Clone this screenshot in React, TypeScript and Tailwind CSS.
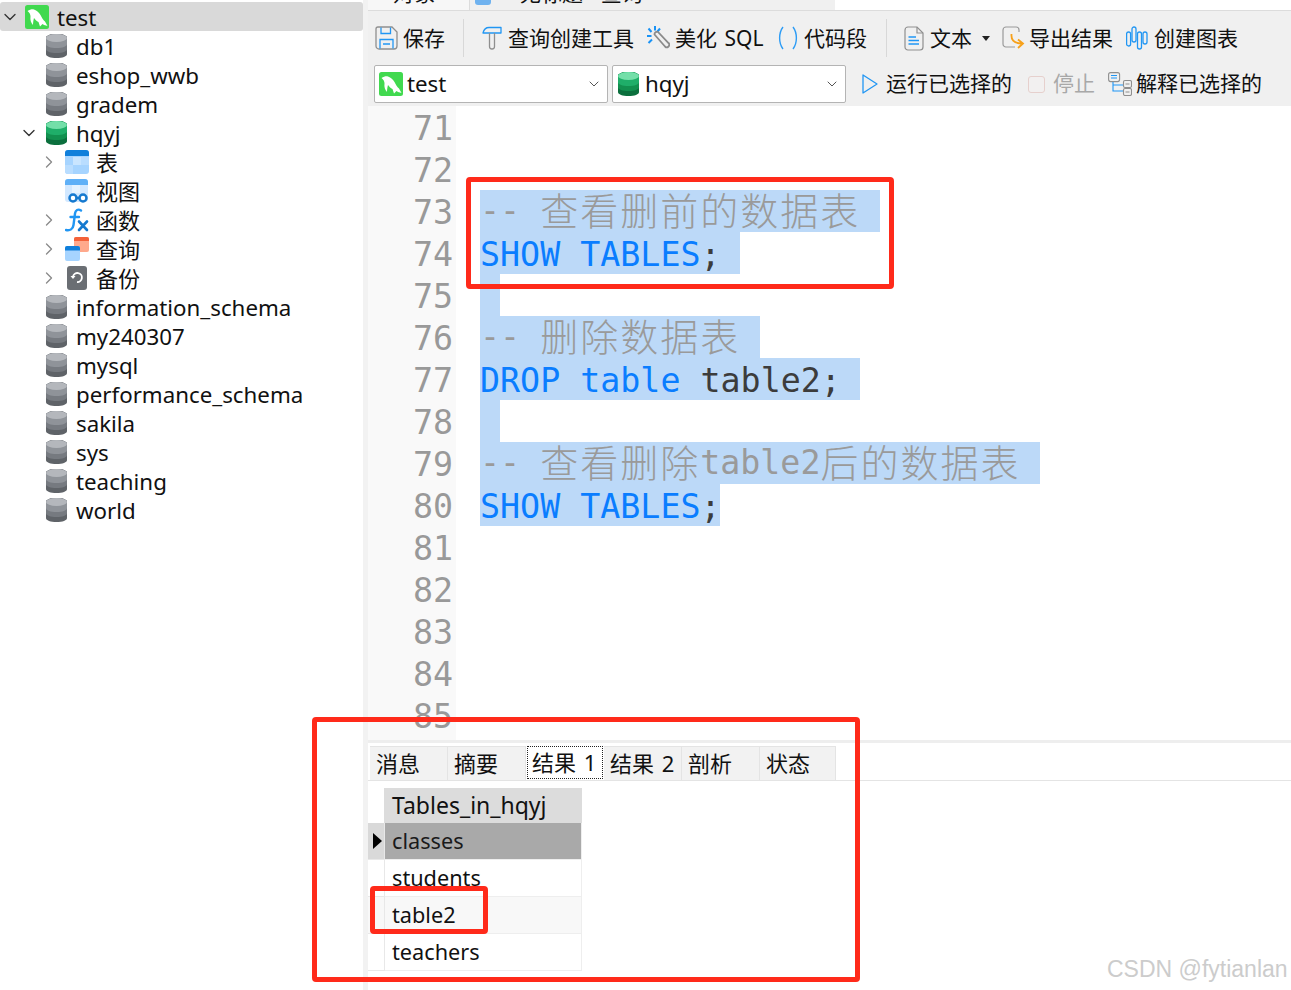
import { ChevronDown, ChevronRight } from 'lucide-react'
import type { ReactNode } from 'react'

const UI_FONT = "font-['Noto_Sans','Noto_Sans_CJK_SC',sans-serif]"

function MysqlIcon({ size = 24 }: { size?: number }) {
  return (
    <svg width={size} height={size} viewBox="0 0 24 24" className="shrink-0">
      <rect width="24" height="24" rx="2.5" fill="#41d94f" />
      <path
        d="M2.500 6C5 4.500 7 4 9 4.500C12 5.500 14 7.500 15.500 10C17 13 18 15 20 16.500L22.500 21C20.500 20.500 19 20 17.500 19L15 21.500C14.500 20 14 18.500 13.500 17C11.500 16 10 14.500 9 13C8.500 15 8 17.500 8 20C6 18 5 15 5.500 11.500C5.500 9.500 4.500 7.500 2.500 6Z"
        fill="#ffffff"
      />
    </svg>
  )
}

function DbIcon({ green = false }: { green?: boolean }) {
  const c = green
    ? ['#74dfa9', '#1fae69', '#12904f', '#0b6f3d']
    : ['#b4b7bc', '#8f9399', '#767a80', '#5f6368']
  return (
    <svg width="21" height="24" viewBox="0 0 21 24" className="shrink-0">
      <path d="M0 4C0 1.500 4.500 0 10.500 0S21 1.500 21 4V20C21 22.500 16.500 24 10.500 24S0 22.500 0 20Z" fill={c[3]} />
      <path d="M0 4C0 1.500 4.500 0 10.500 0S21 1.500 21 4V15C21 17.500 16.500 19 10.500 19S0 17.500 0 15Z" fill={c[2]} />
      <path d="M0 4C0 1.500 4.500 0 10.500 0S21 1.500 21 4V10C21 12.500 16.500 14 10.500 14S0 12.500 0 10Z" fill={c[1]} />
      <ellipse cx="10.500" cy="4" rx="10.500" ry="4" fill={c[0]} />
    </svg>
  )
}

function TableIcon() {
  return (
    <svg width="24" height="24" viewBox="0 0 24 24" className="shrink-0">
      <rect width="24" height="24" rx="3" fill="#a6d4ff" />
      <path d="M8 7H16V15H8Z" fill="#c9e5ff" />
      <path d="M0 15H8V24H3A3 3 0 0 1 0 21ZM16 7H24V15H16Z" fill="#b9ddff" />
      <path d="M0 3A3 3 0 0 1 3 0H21A3 3 0 0 1 24 3V6H0Z" fill="#0f7fdb" />
    </svg>
  )
}

function ViewIcon() {
  return (
    <svg width="24" height="24" viewBox="0 0 24 24" className="shrink-0">
      <rect width="23" height="23" rx="3" fill="#d2e8ff" />
      <path d="M0 3A3 3 0 0 1 3 0H20A3 3 0 0 1 23 3V6H0Z" fill="#5fb0f7" />
      <path d="M7 6H15V14H7Z" fill="#e6f3ff" />
      <circle cx="8" cy="19" r="3.500" fill="#fff" stroke="#1579cf" strokeWidth="2.500" />
      <circle cx="18" cy="19" r="3.500" fill="#fff" stroke="#1579cf" strokeWidth="2.500" />
      <path d="M11 19H15" stroke="#1579cf" strokeWidth="2.500" />
    </svg>
  )
}

function FuncIcon() {
  return (
    <svg width="24" height="24" viewBox="0 0 24 24" className="shrink-0" fill="none">
      <path d="M16 2.500C13 0.500 10.500 2 10 5.500L8.500 17C8 21 5 23 1 22" stroke="#2196f3" strokeWidth="2.400" strokeLinecap="round" />
      <path d="M5.500 9H14" stroke="#2196f3" strokeWidth="2.400" strokeLinecap="round" />
      <path d="M14 13.500L22 22M22 13.500L14 22" stroke="#1579cf" strokeWidth="2.600" strokeLinecap="round" />
    </svg>
  )
}

function QueryIcon() {
  return (
    <svg width="24" height="24" viewBox="0 0 24 24" className="shrink-0">
      <rect x="9" y="0" width="15" height="15" rx="2" fill="#ffa98c" />
      <path d="M9 2A2 2 0 0 1 11 0H22A2 2 0 0 1 24 2V4H9Z" fill="#f4623a" />
      <rect x="0" y="9" width="15" height="15" rx="2" fill="#a6d4ff" />
      <path d="M0 11A2 2 0 0 1 2 9H13A2 2 0 0 1 15 11V13.500H0Z" fill="#0f7fdb" />
    </svg>
  )
}

function BackupIcon() {
  return (
    <svg width="24" height="24" viewBox="0 0 24 24" className="shrink-0" fill="none">
      <rect x="2" width="20" height="24" rx="3" fill="#6a6e73" />
      <path d="M8 10.500A4.500 4.500 0 1 1 12 16" stroke="#fff" strokeWidth="1.800" />
      <path d="M5.500 10H10.500L8 13Z" fill="#fff" />
    </svg>
  )
}

function SaveIcon() {
  return (
    <svg width="23" height="24" viewBox="0 0 23 24" className="shrink-0" fill="none">
      <path d="M3 1H17L22 6V20A3 3 0 0 1 19 23H4A3 3 0 0 1 1 20V3A2 2 0 0 1 3 1Z" stroke="#8f8f8f" strokeWidth="1.300" />
      <path d="M6 1.500V7.500H15.500V1.500" stroke="#2196f3" strokeWidth="1.300" />
      <path d="M5 22.500V13.500H18V22.500M8 18H15" stroke="#2196f3" strokeWidth="1.300" />
    </svg>
  )
}

function HammerIcon() {
  return (
    <svg width="20" height="24" viewBox="0 0 20 24" className="shrink-0" fill="none">
      <path d="M1 7C2 3 4 1.500 7 1.500H19V7Z" stroke="#2196f3" strokeWidth="1.300" strokeLinejoin="round" />
      <path d="M7.500 7V20.500A2.500 2.500 0 0 0 12.500 20.500V7" stroke="#8f8f8f" strokeWidth="1.300" />
    </svg>
  )
}

function BeautifyIcon() {
  return (
    <svg width="23" height="24" viewBox="0 0 23 24" className="shrink-0" fill="none">
      <path d="M8 0V4.500M1.500 2.500L4.500 6M0 10H4.500M1.500 17L5 13.500M13 2.500L10.500 5.500" stroke="#1a93f5" strokeWidth="2" />
      <path d="M7.500 8.500L18 20.500A2.400 2.400 0 0 0 21.500 17L11 6A2.500 2.500 0 0 0 7.500 8.500Z" stroke="#8a8a8a" strokeWidth="1.800" />
    </svg>
  )
}

function ParenIcon() {
  return (
    <svg width="20" height="24" viewBox="0 0 20 24" className="shrink-0" fill="none">
      <path d="M5 1C0.500 7 0.500 17 5 23M15 1C19.500 7 19.500 17 15 23" stroke="#2d9cf5" strokeWidth="1.400" />
    </svg>
  )
}

function DocIcon() {
  return (
    <svg width="20" height="25" viewBox="0 0 20 25" className="shrink-0" fill="none">
      <path d="M4 1H13L19 7V21A3 3 0 0 1 16 24H4A3 3 0 0 1 1 21V4A3 3 0 0 1 4 1Z" stroke="#8f8f8f" strokeWidth="1.200" />
      <path d="M13 1V7H19" stroke="#8f8f8f" strokeWidth="1.200" />
      <path d="M4.500 11H12M4.500 14.500H15M4.500 18H15" stroke="#1f96f5" strokeWidth="1.300" />
    </svg>
  )
}

function ExportIcon() {
  return (
    <svg width="23" height="24" viewBox="0 0 23 24" className="shrink-0" fill="none">
      <path d="M13 21H4A3 3 0 0 1 1 18V4A3 3 0 0 1 4 1H14A3 3 0 0 1 17 4V6" stroke="#9a9a9a" strokeWidth="1.200" />
      <path d="M9.500 8C9 13 11 17.500 20 17.500M16 13.500L21 17.500L16 22" stroke="#f7a11a" strokeWidth="1.800" />
    </svg>
  )
}

function ChartIcon() {
  return (
    <svg width="22" height="24" viewBox="0 0 22 24" className="shrink-0" fill="none" stroke="#2196f3" strokeWidth="1.300">
      <rect x="0.600" y="6" width="4" height="14" rx="2" />
      <rect x="6" y="1" width="4" height="15" rx="2" />
      <rect x="11.500" y="6" width="4" height="17" rx="2" />
      <rect x="17" y="6" width="4" height="12" rx="2" />
    </svg>
  )
}

function PlayIcon() {
  return (
    <svg width="16" height="20" viewBox="0 0 16 20" className="shrink-0" fill="none">
      <path d="M1 1L15 10L1 19Z" stroke="#2196f3" strokeWidth="1.300" strokeLinejoin="round" />
    </svg>
  )
}

function StopIcon() {
  return <div className="w-[17px] h-[17px] shrink-0 rounded-[3px] border border-[#e6d0cd] bg-[#f2f0f0]" />
}

function ExplainIcon() {
  return (
    <svg width="24" height="24" viewBox="0 0 24 24" className="shrink-0" fill="none">
      <rect x="0.600" y="0.600" width="11" height="9" rx="2" stroke="#8f8f8f" strokeWidth="1.100" />
      <path d="M3 3.500H9M3 6H9" stroke="#1f96f5" strokeWidth="1.100" />
      <path d="M5 10V19H15M5 13H15" stroke="#1f96f5" strokeWidth="1.100" />
      <rect x="15.500" y="8.500" width="8" height="7" rx="1.500" stroke="#8f8f8f" strokeWidth="1.100" />
      <rect x="15.500" y="16.500" width="8" height="7" rx="1.500" stroke="#8f8f8f" strokeWidth="1.100" />
      <path d="M17.500 12H21.500M17.500 20H21.500" stroke="#8f8f8f" strokeWidth="1.100" />
    </svg>
  )
}

type TreeItem = { label: string; level: 0 | 1 | 2; icon: ReactNode; chevron?: 'down' | 'right'; active?: boolean }

const dbs = (names: string[]): TreeItem[] => names.map((label) => ({ label, level: 1, icon: <DbIcon /> }))

const treeItems: TreeItem[] = [
  { label: 'test', level: 0, icon: <MysqlIcon />, chevron: 'down', active: true },
  ...dbs(['db1', 'eshop_wwb', 'gradem']),
  { label: 'hqyj', level: 1, icon: <DbIcon green />, chevron: 'down' },
  { label: '表', level: 2, icon: <TableIcon />, chevron: 'right' },
  { label: '视图', level: 2, icon: <ViewIcon /> },
  { label: '函数', level: 2, icon: <FuncIcon />, chevron: 'right' },
  { label: '查询', level: 2, icon: <QueryIcon />, chevron: 'right' },
  { label: '备份', level: 2, icon: <BackupIcon />, chevron: 'right' },
  ...dbs(['information_schema', 'my240307', 'mysql', 'performance_schema', 'sakila', 'sys', 'teaching', 'world']),
]

const levelClass = {
  0: 'pl-0 gap-[5px]',
  1: 'pl-[19px] gap-[7px]',
  2: 'pl-[39px] gap-[6px]',
}

function Sidebar() {
  return (
    <div className={`w-[363px] shrink-0 pt-[2px] bg-white text-[#111] text-[22.300px] ${UI_FONT}`}>
      {treeItems.map((item) => (
        <div
          key={item.label}
          className={`flex items-center h-[29px] rounded-[3px] ${levelClass[item.level]} ${item.active ? 'bg-[#d9d9d9]' : ''}`}
        >
          <div className="w-[20px] flex justify-center shrink-0">
            {item.chevron === 'down' && <ChevronDown size={20} strokeWidth={1.600} className="text-[#333]" />}
            {item.chevron === 'right' && <ChevronRight size={20} strokeWidth={1.600} className="text-[#8a8a8a]" />}
          </div>
          {item.icon}
          <span className={`whitespace-nowrap pt-[2px] ${item.level === 0 ? 'ml-[3px]' : item.level === 1 ? 'ml-[2px]' : 'ml-[1px] text-[22px]'}`}>
            {item.label}
          </span>
        </div>
      ))}
    </div>
  )
}

function TopTabs() {
  return (
    <div className={`flex h-[11px] overflow-hidden text-[21px] text-[#111] border-b border-[#dcdcdc] ${UI_FONT}`}>
      <div className="w-[102px] bg-[#f7f7f7] border-r border-[#dcdcdc] pl-[25px]">
        <div className="-mt-[22px] leading-[30px]">对象</div>
      </div>
      <div className="w-[365px] bg-[#f0f0f0] flex">
        <div className="w-[16px] h-[5px] ml-[5px] rounded-b-[3px] bg-[#6fb2ef]" />
        <div className="-mt-[22px] leading-[30px] ml-[29px] whitespace-nowrap">无标题 - 查询</div>
      </div>
      <div className="flex-1 bg-white" />
    </div>
  )
}

function Separator() {
  return <div className="w-px h-[38px] bg-[#d8d8d8] shrink-0" />
}

function Toolbar() {
  return (
    <div className={`bg-[#f0f0f0] h-[95px] text-[21px] text-[#111] ${UI_FONT}`}>
      <div className="flex items-center h-[54px] pl-[7px] whitespace-nowrap [&>span]:pt-[2px]">
        <SaveIcon />
        <span className="ml-[5px] w-[42px]">保存</span>
        <div className="ml-[18px]"><Separator /></div>
        <div className="ml-[18px]"><HammerIcon /></div>
        <span className="ml-[6px] w-[126px]">查询创建工具</span>
        <div className="ml-[13px]"><BeautifyIcon /></div>
        <span className="ml-[5px] w-[88px] [word-spacing:2px]">美化 SQL</span>
        <div className="ml-[15px]"><ParenIcon /></div>
        <span className="ml-[6px] w-[64px]">代码段</span>
        <div className="ml-[18px]"><Separator /></div>
        <div className="ml-[17px]"><DocIcon /></div>
        <span className="ml-[6px] w-[42px]">文本</span>
        <svg width="8" height="5" viewBox="0 0 8 5" className="ml-[10px] shrink-0"><path d="M0 0H8L4 5Z" fill="#222" /></svg>
        <div className="ml-[12px]"><ExportIcon /></div>
        <span className="ml-[4px] w-[84px]">导出结果</span>
        <div className="ml-[13px]"><ChartIcon /></div>
        <span className="ml-[6px] w-[84px]">创建图表</span>
      </div>
      <div className="flex items-center h-[38px] pl-[6px] whitespace-nowrap">
        <div className="flex items-center w-[234px] h-[38px] bg-white border border-[#b4b4b4] rounded-[2px] pl-[4px] pr-[5px]">
          <MysqlIcon />
          <span className="ml-[4px] flex-1 text-[22.300px]">test</span>
          <ChevronDown size={16} strokeWidth={1.500} className="text-[#555]" />
        </div>
        <div className="flex items-center w-[234px] h-[38px] ml-[4px] bg-white border border-[#b4b4b4] rounded-[2px] pl-[5px] pr-[5px]">
          <DbIcon green />
          <span className="ml-[6px] flex-1 text-[22.300px]">hqyj</span>
          <ChevronDown size={16} strokeWidth={1.500} className="text-[#555]" />
        </div>
        <div className="ml-[16px]"><PlayIcon /></div>
        <span className="ml-[8px] w-[127px]">运行已选择的</span>
        <div className="ml-[15px]"><StopIcon /></div>
        <span className="ml-[8px] w-[42px] text-[#a8a8a8]">停止</span>
        <div className="ml-[13px]"><ExplainIcon /></div>
        <span className="ml-[4px]">解释已选择的</span>
      </div>
    </div>
  )
}

const KW = 'text-[#0a7dff]'
const CM = 'text-[#9a9a9a]'
const ID = 'text-[#3c3c3c]'

function Cjk({ children }: { children: string }) {
  return <span className="font-['Noto_Sans_CJK_SC',sans-serif] text-[38px] leading-[0] align-[-3px] font-light tracking-[2px]">{children}</span>
}

const codeLines: { n: number; sel?: string; content?: ReactNode }[] = [
  { n: 71 },
  { n: 72 },
  { n: 73, sel: 'w-[400px] leading-[42px]', content: <span className={CM}>{'-- '}<Cjk>查看删前的数据表</Cjk></span> },
  { n: 74, sel: 'w-[260px]', content: <><span className={KW}>SHOW TABLES</span><span className={ID}>;</span></> },
  { n: 75, sel: 'w-[20px]' },
  { n: 76, sel: 'w-[280px] leading-[42px]', content: <span className={CM}>{'-- '}<Cjk>删除数据表</Cjk></span> },
  { n: 77, sel: 'w-[380px]', content: <><span className={KW}>DROP table</span><span className={ID}> table2;</span></> },
  { n: 78, sel: 'w-[20px]' },
  { n: 79, sel: 'w-[560px] leading-[42px]', content: <span className={CM}>{'-- '}<Cjk>查看删除</Cjk>table2<Cjk>后的数据表</Cjk></span> },
  { n: 80, sel: 'w-[240px]', content: <><span className={KW}>SHOW TABLES</span><span className={ID}>;</span></> },
  { n: 81 },
  { n: 82 },
  { n: 83 },
  { n: 84 },
  { n: 85 },
]

function Editor() {
  return (
    <div className="flex h-[634px] overflow-hidden bg-white text-[33.300px] leading-[46px] font-['DejaVu_Sans_Mono',monospace]">
      <div className="w-[88px] shrink-0 bg-[#f9f9f9] pr-[3px] text-right text-[#999]">
        {codeLines.map((line) => (
          <div key={line.n} className="h-[42px]">{line.n}</div>
        ))}
      </div>
      <div className="pl-[24px] flex-1">
        {codeLines.map((line) => (
          <div key={line.n} className="h-[42px] whitespace-pre">
            {line.sel && <div className={`h-[42px] bg-[#bcd9f8] ${line.sel}`}>{line.content}</div>}
          </div>
        ))}
      </div>
    </div>
  )
}

const resultTabs = ['消息', '摘要', '结果 1', '结果 2', '剖析', '状态']

function ResultTabs() {
  return (
    <div className={`flex h-[35px] mt-[3px] pl-[2px] border-b border-[#e4e4e4] text-[22px] text-[#111] ${UI_FONT}`}>
      {resultTabs.map((tab) =>
        tab === '结果 1' ? (
          <div key={tab} className="w-[78px] h-[35px] -mt-px bg-white flex items-center justify-center">
            <span className="w-[76px] h-[33px] border border-dotted border-[#222] pl-[4px] flex items-center whitespace-nowrap [word-spacing:2px]">{tab}</span>
          </div>
        ) : (
          <div
            key={tab}
            className={`h-[34px] bg-[#f2f2f2] border-r border-t border-[#e4e4e4] pl-[6px] flex items-center whitespace-nowrap [word-spacing:2px] ${tab === '状态' ? 'w-[76px]' : 'w-[78px]'}`}
          >
            {tab}
          </div>
        ),
      )}
    </div>
  )
}

const gridRows = [
  { name: 'classes', rowClass: 'bg-[#a9a9a9] text-[#1a1a1a]', headClass: 'bg-[#d9d9d9]' },
  { name: 'students', rowClass: 'bg-white', headClass: 'bg-white' },
  { name: 'table2', rowClass: 'bg-[#f8f8f8]', headClass: 'bg-[#f8f8f8]' },
  { name: 'teachers', rowClass: 'bg-white', headClass: 'bg-white' },
]

function ResultGrid() {
  return (
    <div className={`pt-[7px] text-[#111] ${UI_FONT}`}>
      <div className="flex h-[35px] text-[23px]">
        <div className="w-[16px]" />
        <div className="w-[198px] bg-[#dcdcdc] pl-[8px] flex items-center">Tables_in_hqyj</div>
      </div>
      {gridRows.map((row) => (
        <div key={row.name} className="flex h-[37px] text-[21.700px]">
          <div className={`w-[17px] border-r border-b border-[#e8e8e8] flex items-center pl-[5px] ${row.headClass}`}>
            {row.name === 'classes' && (
              <svg width="9" height="16" viewBox="0 0 9 16"><path d="M0 0L9 8L0 16Z" fill="#000" /></svg>
            )}
          </div>
          <div className={`w-[197px] pl-[7px] flex items-center border-r border-b border-[#eeeeee] ${row.rowClass}`}>{row.name}</div>
        </div>
      ))}
    </div>
  )
}

export default function App() {
  return (
    <div className="relative flex w-[1291px] h-[990px] overflow-hidden bg-white">
      <Sidebar />
      <div className="w-[5px] shrink-0 bg-[#f2f2f2]" />
      <div className="flex-1 min-w-0">
        <TopTabs />
        <Toolbar />
        <Editor />
        <div className="h-[3px] bg-[#eeeeee]" />
        <ResultTabs />
        <ResultGrid />
      </div>

      {/* annotations drawn over the screenshot */}
      <div className="absolute left-[466px] top-[177px] w-[428px] h-[112px] border-[5px] border-[#ff2a1a] rounded-[4px]" />
      <div className="absolute left-[312px] top-[717px] w-[548px] h-[265px] border-[5px] border-[#ff2a1a] rounded-[4px]" />
      <div className="absolute left-[370px] top-[886px] w-[118px] h-[48px] border-[5px] border-[#ff2a1a] rounded-[4px]" />
      <div className="absolute left-[1107px] top-[954px] text-[23px] leading-[30px] text-[#cccccc] font-['Liberation_Sans',sans-serif] whitespace-nowrap">
        CSDN @fytianlan
      </div>
    </div>
  )
}
